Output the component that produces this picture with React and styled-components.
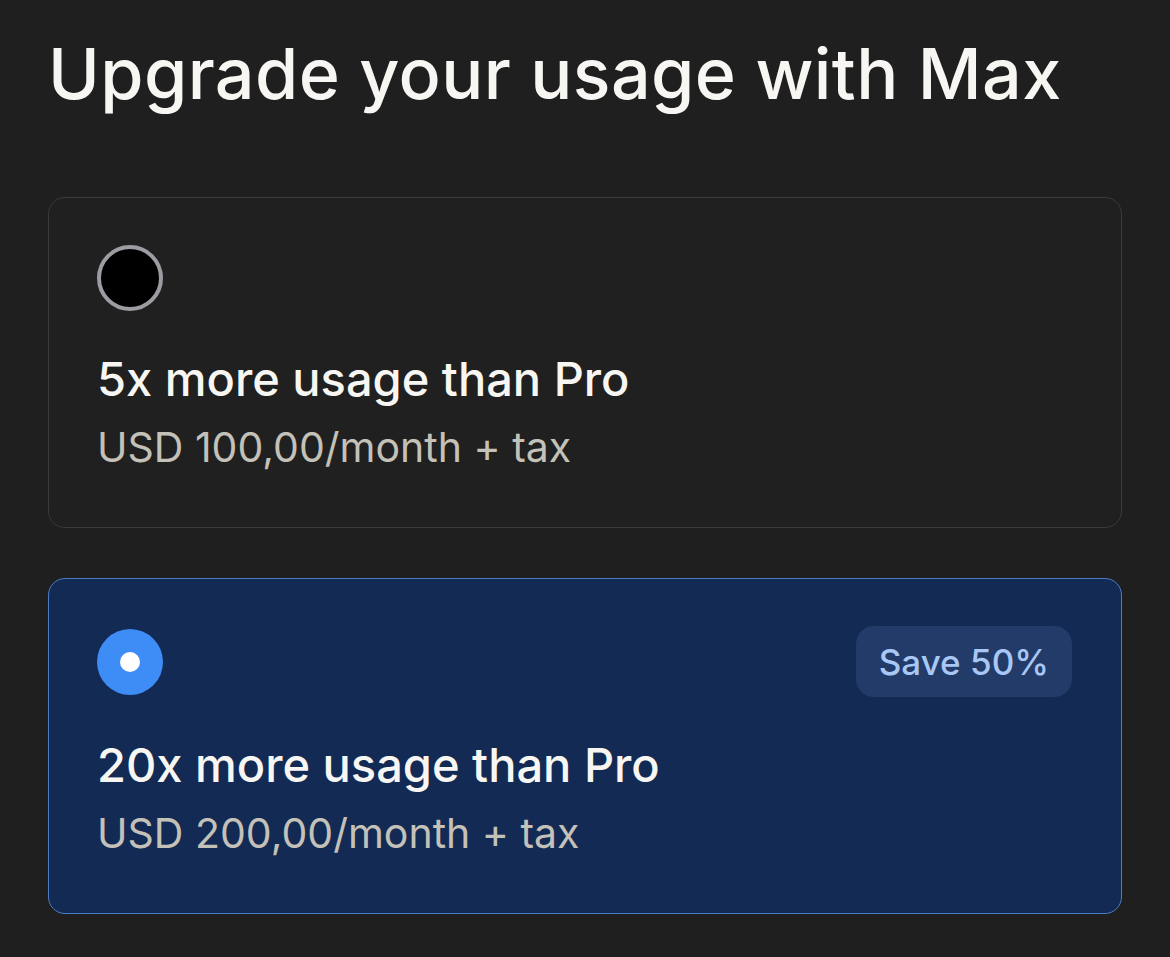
import styled, { createGlobalStyle } from 'styled-components';

const GlobalStyle = createGlobalStyle`
    html, body {
        margin: 0;
        padding: 0;
        background: #1f1f1f;
    }
    body {
        font-family: Inter, "Noto Sans", sans-serif;
        color: #f7f6f2;
    }
`;

const Page = styled.div`
    padding: 30px 48px 40px 48px;
    width: 1170px;
    box-sizing: border-box;
`;

const Title = styled.h1`
    margin: 0 0 79px 0;
    font-size: 70px;
    font-weight: 500;
    letter-spacing: 0.4px;
    line-height: 88px;
    color: #f7f6f2;
`;

const Options = styled.div`
    display: flex;
    flex-direction: column;
    gap: 50px;
`;

const Card = styled.div`
    border-radius: 17px;
    border: 1px solid ${(props) => (props.selected ? '#4d7cc6' : '#3a3a3a')};
    background: ${(props) => (props.selected ? '#132a55' : '#202020')};
    padding: 47px 48px 52px 48px;
    cursor: pointer;
`;

const TopRow = styled.div`
    display: flex;
    align-items: center;
    justify-content: space-between;
    margin-bottom: 38px;
`;

const Radio = styled.span`
    width: 66px;
    height: 66px;
    border-radius: 50%;
    box-sizing: border-box;
    display: flex;
    align-items: center;
    justify-content: center;
    background: ${(props) => (props.checked ? '#3e8cf5' : '#000')};
    border: ${(props) => (props.checked ? 'none' : '4px solid #9d9ca2')};
    &::after {
        content: '';
        display: ${(props) => (props.checked ? 'block' : 'none')};
        width: 20px;
        height: 20px;
        border-radius: 50%;
        background: #fff;
    }
`;

const Badge = styled.span`
    background: #223b68;
    color: #a9c7f5;
    border-radius: 18px;
    padding: 0 23px;
    height: 71px;
    display: flex;
    align-items: center;
    font-size: 35px;
    font-weight: 500;
    margin-right: 1px;
`;

const PlanName = styled.div`
    font-size: 47px;
    font-weight: 500;
    line-height: 60px;
    color: #f7f6f2;
`;

const Price = styled.div`
    margin-top: 10px;
    font-size: 41px;
    line-height: 56px;
    color: #c3c1b8;
`;

const plans = [
    { id: 'max5', name: '5x more usage than Pro', price: 'USD 100,00/month + tax' },
    { id: 'max20', name: '20x more usage than Pro', price: 'USD 200,00/month + tax', badge: 'Save 50%' },
];

function App() {
    const selected = 'max20';
    return (
        <>
            <GlobalStyle />
            <Page>
                <Title>Upgrade your usage with Max</Title>
                <Options>
                    {plans.map((plan) => (
                        <Card key={plan.id} selected={plan.id === selected}>
                            <TopRow>
                                <Radio checked={plan.id === selected} />
                                {plan.badge ? <Badge>{plan.badge}</Badge> : null}
                            </TopRow>
                            <PlanName>{plan.name}</PlanName>
                            <Price>{plan.price}</Price>
                        </Card>
                    ))}
                </Options>
            </Page>
        </>
    );
}

export default App;
